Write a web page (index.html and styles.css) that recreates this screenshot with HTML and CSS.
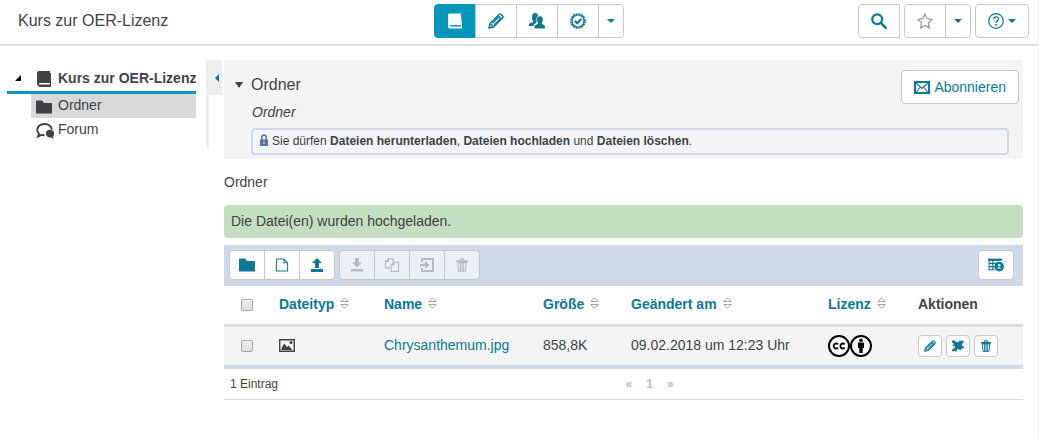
FILE: index.html
```html
<!DOCTYPE html>
<html lang="de">
<head>
<meta charset="utf-8">
<title>Kurs zur OER-Lizenz</title>
<link rel="stylesheet" href="styles.css">
</head>
<body>
<svg class="sprite" aria-hidden="true">
  <symbol id="i-book" viewBox="0 0 16 16"><path fill="currentColor" d="M3 0h11v12H3.500a.8.800 0 0 0 0 1.500H14V15H3a2 2 0 0 1-2-2V2a2 2 0 0 1 2-2z"/><path d="M14.500 2v13.500H3" fill="none" stroke="currentColor"/></symbol>
  <symbol id="i-book-line" viewBox="0 0 16 16"><path fill="currentColor" d="M2.500.5H14V12H3.500a.8.800 0 0 0 0 1.500H14v-1l1-10V15.500H3a2 2 0 0 1-2-2V2q0-1.500 1.500-1.500z"/></symbol>
  <symbol id="i-pencil" viewBox="0 0 16 16"><g fill="none" stroke="currentColor" stroke-width="1.500" stroke-linejoin="round"><path d="M1 15l1-4.500L11 1.500q1-1 2.200 0l1.300 1.300q1 1.200 0 2.200L5.500 14z"/><path d="M10 2.500L13.500 6M2.300 10.800l3 3M4.500 10.200l6-6M6.200 12l6-6"/></g><path d="M1 15l.5-2 1.500 1.500z" fill="currentColor"/></symbol>
  <symbol id="i-users" viewBox="0 0 16 16"><g fill="currentColor"><path d="M6 0c2.200 0 3.300 1.500 3 3.300C7.500 4.500 7 6 7.700 8.300 7 9 7.500 9.800 7.500 9.800L5 11.500 4.200 13H0v-1.500C0 10 4 9.500 4.300 8.500 3 7 2.800 5 3 3 3.200 1 4.500 0 6 0z"/><path d="M11 3.200c2 0 3 1.300 2.900 3.200-.1 1.800-.7 2.800-1.200 3.400 0 2 3.300 1.700 3.300 4.200v1.500H5.500V14c0-2.500 3.600-2.200 3.600-4.200C8.300 8.800 8 7.800 8 6.400c0-1.900 1-3.200 3-3.200z"/></g></symbol>
  <symbol id="i-badge" viewBox="0 0 16 16"><circle cx="8" cy="8" r="7.100" fill="none" stroke="currentColor" stroke-width="1.500" stroke-dasharray="2.200 .6"/><circle cx="8" cy="8" r="6" fill="none" stroke="currentColor" stroke-width="1.200"/><path d="M4.800 8l2.300 2.300L11.300 6" fill="none" stroke="currentColor" stroke-width="2"/></symbol>
  <symbol id="i-search" viewBox="0 0 16 16"><circle cx="6.200" cy="6.200" r="4.900" fill="none" stroke="currentColor" stroke-width="2.300"/><path d="M9.800 9.800l5 5" stroke="currentColor" stroke-width="2.600" stroke-linecap="round"/></symbol>
  <symbol id="i-star" viewBox="0 0 16 16"><path d="M8 1.200l2.100 4.500 4.900.7-3.600 3.400.9 5L8 12.400l-4.300 2.400.9-5L1 6.400l4.900-.7z" fill="none" stroke="currentColor" stroke-width="1.300"/></symbol>
  <symbol id="i-help" viewBox="0 0 16 16"><circle cx="8" cy="8" r="7.300" fill="none" stroke="currentColor" stroke-width="1.200"/><path d="M5.700 6.300C5.700 3 10.400 3 10.400 6c0 1.700-2.300 1.700-2.300 3.700" fill="none" stroke="currentColor" stroke-width="1.300"/><path d="M7.300 11h1.600v1.600H7.300z" fill="currentColor"/></symbol>
  <symbol id="i-down" viewBox="0 0 8 4"><path d="M0 0h8L4 4z" fill="currentColor"/></symbol>
  <symbol id="i-folder" viewBox="0 0 16 14"><path fill="currentColor" d="M0 1.500Q0 .5 1 .5h5L8 3h7.500l.5.500v10H0z"/></symbol>
  <symbol id="i-chat" viewBox="0 0 18 16"><path d="M8.500 12.200q-2 .1-3.200-.4L2 13.500 3 10.800C-.8 7 2 1 8.500 1c4.500 0 7.300 2.500 7.200 5.700" fill="none" stroke="currentColor" stroke-width="1.900"/><path fill="currentColor" d="M13.600 6.800c5.300 0 5.700 5 3.300 6.600l1.100 2.400-3-1.200c-6.600.5-6.600-7.800-1.400-7.800z"/></symbol>
  <symbol id="i-mail" viewBox="0 0 16 13"><g fill="none" stroke="currentColor"><path d="M1 1h14v11H1z" stroke-width="2"/><path d="M2 2l6 5.500L14 2M2 11.500L6 6.500M14 11.500l-4-5" stroke-width="1.100"/></g></symbol>
  <symbol id="i-lock" viewBox="0 0 8 12"><path d="M1.800 6V3.300C1.800.2 6.200.2 6.200 3.300V6" fill="none" stroke="currentColor" stroke-width="1.500"/><path d="M0 5.500h8V12H0z" fill="currentColor"/><path d="M3.500 7.500h1V10h-1z" fill="#dfe6f2"/></symbol>
  <symbol id="i-file" viewBox="0 0 14 15"><path d="M1 1h8l4 4v9H1zM9 1v4h4" fill="none" stroke="currentColor" stroke-width="1.100"/></symbol>
  <symbol id="i-upload" viewBox="0 0 12 14"><path fill="currentColor" d="M6 0l5 5H8v5H4V5H1zM0 11h12v3H0z"/></symbol>
  <symbol id="i-download" viewBox="0 0 12 14"><path fill="currentColor" d="M6 9.500l5-5H8V0H4v4.500H1zM0 11h12v2.500H0z"/></symbol>
  <symbol id="i-copy" viewBox="0 0 16 15"><g fill="none" stroke="currentColor" stroke-width="1.300"><path d="M6 10.500H1V4l3-3h5v3M4 1v3H1"/><path d="M7 14.300V7.500l3-3h5v9.800zM10 4.500v3H7"/></g></symbol>
  <symbol id="i-move" viewBox="0 0 14 14"><path d="M2 4V1h11v12H2v-3" fill="none" stroke="currentColor" stroke-width="2"/><path fill="currentColor" d="M0 5.700h5V3l4.500 4L5 11V8.300H0z"/></symbol>
  <symbol id="i-trash" viewBox="0 0 12 14"><path d="M0 3h12M4 2.500Q4 .7 6 .7t2 1.800M1 4.500h10" fill="none" stroke="currentColor" stroke-width="1.300"/><path d="M1.700 5l.8 8.300h7l.8-8.300M4.400 5v8M6 5v8M7.600 5v8" fill="none" stroke="currentColor" stroke-width="1.100"/></symbol>
  <symbol id="i-table" viewBox="0 0 15 12"><path d="M.5 1.500h12M.5 4.500H9M.5 7.500h6M.5 10.500h6M1 1v10M4.500 1v10" fill="none" stroke="currentColor"/><path d="M0 0h13v2H0z" fill="currentColor"/><circle cx="10.500" cy="7.500" r="4.500" fill="currentColor"/><circle cx="10.500" cy="6.300" r="1.200" fill="#fff"/><path d="M8.400 9.300q2.100-2.300 4.200 0z" fill="#fff"/></symbol>
  <symbol id="i-sort" viewBox="0 0 9 12"><path d="M.8 4.500h7.400L4.500.8zM.8 7.500h7.400L4.500 11.200z" fill="none" stroke="currentColor" stroke-width=".8"/></symbol>
  <symbol id="i-image" viewBox="0 0 16 13"><path d="M.7.700h14.600v11.600H.7z" fill="none" stroke="currentColor" stroke-width="1.400"/><path fill="currentColor" d="M2.500 11V9L5.300 4.500 8 8l1.500-1.500L13.500 11z"/><circle cx="12" cy="3.500" r="1.500" fill="currentColor"/></symbol>
  <symbol id="i-puzzle" viewBox="0 0 12 12"><path fill="currentColor" d="M.3.800Q1.800-.5 3 1l1.500 1Q6 2.800 6.800 1.500L8 .3 9.300 1.500Q10.500-.3 11.700.8q.8 1.500-1.200 2.400L9.800 5q.2 1.300 1.200.8 1.300.5.800 2-.7 1.500-2 .4L9 10.500 7 9.600 6 9Q4.800 9 5 10.500L4 12 2.800 10.500Q1.500 12.300.3 11q-.8-1.500 1-2.300L2.800 7.500 2.500 6 .3 5.500 2 3.800Q-.8 2.500.3.800z"/></symbol>
  <symbol id="i-cc" viewBox="0 0 22 22"><circle cx="11" cy="11" r="10" fill="#fff" stroke="#000" stroke-width="2"/><path d="M10 9.300a2.500 2.500 0 1 0 0 3.400M16.700 9.300a2.500 2.500 0 1 0 0 3.400" fill="none" stroke="#000" stroke-width="1.800"/></symbol>
  <symbol id="i-by" viewBox="0 0 22 22"><circle cx="11" cy="11" r="10" fill="#fff" stroke="#000" stroke-width="2"/><circle cx="11" cy="5.300" r="1.800"/><path d="M8 8q0-.5.500-.5h5q.5 0 .5.500v5h-1.300v5H9.300v-5H8z"/></symbol>
</svg>

<div class="page">
  <header class="navbar">
    <div class="course-title">Kurs zur OER-Lizenz</div>
    <div class="btn-group tools">
      <button class="btn active" aria-label="Kurs"><svg class="ico"><use href="#i-book-line"/></svg></button>
      <button class="btn" aria-label="Bearbeiten"><svg class="ico"><use href="#i-pencil"/></svg></button>
      <button class="btn" aria-label="Mitglieder"><svg class="ico"><use href="#i-users"/></svg></button>
      <button class="btn" aria-label="Bewertung"><svg class="ico"><use href="#i-badge"/></svg></button>
      <button class="btn caret-btn" aria-label="Mehr"><svg class="caret"><use href="#i-down"/></svg></button>
    </div>
    <div class="nav-right">
      <button class="btn" aria-label="Suche"><svg class="ico"><use href="#i-search"/></svg></button>
      <div class="btn-group">
        <button class="btn muted" aria-label="Favorit"><svg class="ico"><use href="#i-star"/></svg></button>
        <button class="btn caret-btn" aria-label="Status"><svg class="caret"><use href="#i-down"/></svg></button>
      </div>
      <button class="btn help" aria-label="Hilfe"><svg class="ico"><use href="#i-help"/></svg><svg class="caret"><use href="#i-down"/></svg></button>
    </div>
  </header>

  <div class="body">
    <nav class="tree">
      <a class="root" href="#"><svg class="tree-toggle" viewBox="0 0 6 6"><path d="M6 0v6H0z"/></svg><svg class="ico"><use href="#i-book"/></svg><span>Kurs zur OER-Lizenz</span></a>
      <a class="node selected" href="#"><svg class="ico"><use href="#i-folder"/></svg><span>Ordner</span></a>
      <a class="node" href="#"><svg class="ico chat"><use href="#i-chat"/></svg><span>Forum</span></a>
    </nav>
    <div class="divider"><button class="collapse" aria-label="Menü einklappen"><svg viewBox="0 0 4 8"><path d="M4 0v8L0 4z" fill="currentColor"/></svg></button></div>

    <main class="content">
      <section class="panel">
        <div class="panel-head">
          <div>
            <h1><svg class="fold" viewBox="0 0 8 6"><path d="M0 0h8L4 6z" fill="currentColor"/></svg>Ordner</h1>
            <p class="subtitle">Ordner</p>
          </div>
          <button class="btn subscribe"><svg><use href="#i-mail"/></svg>Abonnieren</button>
        </div>
        <p class="rights"><svg><use href="#i-lock"/></svg>Sie dürfen <b>Dateien herunterladen</b>, <b>Dateien hochladen</b> und <b>Dateien löschen</b>.</p>
      </section>

      <p class="crumb">Ordner</p>
      <p class="success">Die Datei(en) wurden hochgeladen.</p>

      <div class="toolbar">
        <div class="btn-group">
          <button class="btn tool" aria-label="Ordner erstellen"><svg class="ico"><use href="#i-folder"/></svg></button>
          <button class="btn tool" aria-label="Dokument erstellen"><svg class="ico"><use href="#i-file"/></svg></button>
          <button class="btn tool" aria-label="Hochladen"><svg class="ico"><use href="#i-upload"/></svg></button>
        </div>
        <div class="btn-group">
          <button class="btn tool" disabled aria-label="Herunterladen"><svg class="ico"><use href="#i-download"/></svg></button>
          <button class="btn tool" disabled aria-label="Kopieren"><svg class="ico"><use href="#i-copy"/></svg></button>
          <button class="btn tool" disabled aria-label="Verschieben"><svg class="ico"><use href="#i-move"/></svg></button>
          <button class="btn tool" disabled aria-label="Löschen"><svg class="ico"><use href="#i-trash"/></svg></button>
        </div>
        <button class="btn tool columns" aria-label="Spalten"><svg class="ico"><use href="#i-table"/></svg></button>
      </div>

      <table class="files">
        <colgroup><col class="c-check"><col class="c-type"><col class="c-name"><col class="c-size"><col class="c-date"><col class="c-lic"><col class="c-act"></colgroup>
        <thead>
          <tr>
            <th class="check"><input type="checkbox" aria-label="Alle auswählen"></th>
            <th><a href="#">Dateityp<svg class="sort"><use href="#i-sort"/></svg></a></th>
            <th><a href="#">Name<svg class="sort"><use href="#i-sort"/></svg></a></th>
            <th><a href="#">Größe<svg class="sort"><use href="#i-sort"/></svg></a></th>
            <th><a href="#">Geändert am<svg class="sort"><use href="#i-sort"/></svg></a></th>
            <th><a href="#">Lizenz<svg class="sort"><use href="#i-sort"/></svg></a></th>
            <th>Aktionen</th>
          </tr>
        </thead>
        <tbody>
          <tr>
            <td class="check"><input type="checkbox" aria-label="Chrysanthemum.jpg auswählen"></td>
            <td><svg class="filetype"><use href="#i-image"/></svg></td>
            <td><a href="#">Chrysanthemum.jpg</a></td>
            <td>858,8K</td>
            <td>09.02.2018 um 12:23 Uhr</td>
            <td class="media"><div class="license"><svg><use href="#i-cc"/></svg><svg><use href="#i-by"/></svg></div></td>
            <td class="media"><div class="actions">
              <button class="btn mini" aria-label="Umbenennen"><svg><use href="#i-pencil"/></svg></button>
              <button class="btn mini" aria-label="Metadaten"><svg><use href="#i-puzzle"/></svg></button>
              <button class="btn mini" aria-label="Löschen"><svg><use href="#i-trash"/></svg></button>
            </div></td>
          </tr>
        </tbody>
      </table>
      <footer class="table-foot">
        <span>1 Eintrag</span>
        <div class="pager"><span>«</span><span>1</span><span>»</span></div>
      </footer>
    </main>
  </div>
</div>
</body>
</html>
```

FILE: styles.css
```css
* { box-sizing: border-box; }
body {
  margin: 0;
  font: 14px/20px "Liberation Sans", Arial, sans-serif;
  color: #3f4345;
  background: #fff;
}
h1, p { margin: 0; font-weight: normal; }
a { color: #0c7891; text-decoration: none; }
svg { flex: none; }
.sprite { display: none; }

.page { min-height: 100vh; border-right: 1px solid #eee; }

/* Buttons */
.btn {
  display: flex;
  align-items: center;
  justify-content: center;
  width: 42px;
  height: 34px;
  padding: 0;
  border: 1px solid #c8c8c8;
  border-radius: 4px;
  background: #fff;
  color: #0c7891;
  font: inherit;
}
.btn.active { background: #0097bb; border-color: #0097bb; color: #fff; }
.btn.muted { color: #999; }
.btn-group { display: flex; }
.btn-group .btn + .btn { margin-left: -1px; border-top-left-radius: 0; border-bottom-left-radius: 0; }
.btn-group .btn:not(:last-child) { border-top-right-radius: 0; border-bottom-right-radius: 0; }
.btn.caret-btn { width: 26px; }
.ico { width: 16px; height: 16px; }
.caret { width: 8px; height: 4px; }

/* Top bar */
.navbar {
  display: grid;
  grid-template-columns: 1fr auto 1fr;
  align-items: start;
  padding: 4px 9px 6px 18px;
  border-bottom: 2px solid #ddd;
}
.course-title { font-size: 16px; line-height: 34px; }
.tools { margin-left: 10px; }
.nav-right { display: flex; justify-content: flex-end; gap: 4px; }
.help.btn { width: 54px; gap: 4px; }
.nav-right > .btn:first-child { border-radius: 4px 0 0 4px; }

.body { display: flex; align-items: flex-start; padding: 14px 15px 0 7px; }

/* Course tree */
.tree { width: 189px; }
.tree a { display: flex; color: inherit; white-space: nowrap; }
.tree .root {
  height: 34px;
  align-items: center;
  padding: 4px 0 0 8px;
  border-bottom: 3px solid #0097bb;
  font-weight: bold;
}
.root .ico { margin: 3px 6px 0 15px; }
.tree-toggle { width: 6px; height: 6px; }
.node { height: 24px; margin-left: 24px; padding-left: 5px; gap: 6px; line-height: 22px; }
.node .ico { margin-top: 5px; }
.node .chat { width: 18px; margin-right: -2px; }
.selected { background: #d9d9d9; }

.divider { width: 3px; height: 89px; margin: 0 15px 0 10px; background: #eee; }
.collapse {
  display: flex;
  align-items: center;
  justify-content: flex-end;
  width: 16px;
  height: 35px;
  padding: 0 3px 0 0;
  border: 0;
  background: #eee;
  color: #0c7891;
}
.collapse svg { width: 4px; height: 8px; }

/* Node header */
.content { flex: 1; min-width: 0; }
.panel { padding: 10px 14px 4px 11px; background: #f4f4f4; }
.panel-head { display: flex; justify-content: space-between; }
h1 { display: flex; align-items: center; gap: 8px; font-size: 16px; line-height: 30px; }
.fold { width: 8px; height: 6px; }
.subtitle { margin: 2px 0 6px 17px; font-style: italic; }
.btn.subscribe { width: auto; margin-right: -10px; padding: 0 12px; gap: 4px; }
.subscribe svg { width: 16px; height: 13px; }
.rights {
  margin-left: 16px;
  padding: 3px 7px 4px;
  border: 2px solid #cfd9e9;
  border-radius: 4px;
  font-size: 12px;
  line-height: 16px;
}
.rights svg { width: 8px; height: 12px; margin-right: 4px; vertical-align: -1px; color: #5773a3; }

.crumb { margin: 13px 0; }
.success { padding: 6px 7px 7px; border-radius: 4px; background: #c4dfbf; }

/* File list */
.toolbar {
  display: flex;
  gap: 4px;
  margin-top: 7px;
  padding: 5px 9px 6px 5px;
  background: #cfd9e9;
}
.btn.tool { width: 36px; height: 30px; }
.tool .ico { height: 14px; }
.btn:disabled { background: #eceff7; color: #b6bac3; }
.columns { margin-left: auto; }

.files { width: 100%; border-collapse: separate; border-spacing: 0; table-layout: fixed; }
.c-check { width: 47px; }
.c-type { width: 105px; }
.c-name { width: 159px; }
.c-size { width: 88px; }
.c-date { width: 197px; }
.c-lic { width: 90px; }
.c-act { width: 113px; }
.files th, .files td { padding: 0 8px 2px; text-align: left; white-space: nowrap; }
.files th { height: 41px; border-bottom: 3px solid #ddd; }
.files td { height: 42px; background: #f4f4f4; border-bottom: 4px solid #cfd9e9; }
.files td.media { padding-bottom: 0; }
.files .check { padding: 0 1px 0 0; text-align: center; }
.files input {
  appearance: none;
  width: 12px;
  height: 12px;
  margin: 0;
  border: 1px solid #a6a6a6;
  border-radius: 2px;
  background: linear-gradient(#f0f0f0, #dedede);
  vertical-align: -1px;
}
.sort { width: 9px; height: 12px; margin-left: 6px; color: #858e8b; }
.filetype { display: block; width: 16px; height: 13px; }
.license { display: flex; }
.license svg { width: 22px; height: 22px; }
.actions { display: flex; gap: 4px; }
.btn.mini { width: 24px; height: 22px; }
.mini svg { width: 12px; height: 12px; }

.table-foot {
  display: grid;
  grid-template-columns: 1fr 1fr;
  padding: 5px 0;
  border-bottom: 1px solid #cfd9e9;
  font-size: 12px;
}
.table-foot > span { padding-left: 6px; }
.pager { display: flex; gap: 14px; padding-left: 2px; color: #bbb; font-weight: bold; }
```
